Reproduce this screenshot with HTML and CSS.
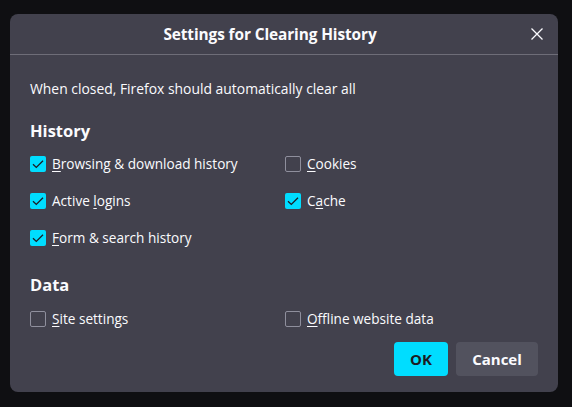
FILE: index.html
```html
<!DOCTYPE html>
<html>
<head>
<meta charset="utf-8">
<link rel="stylesheet" href="styles.css">
</head>
<body>
<div class="dialog">
  <div class="header">
    <div class="title">Settings for Clearing History</div>
    <svg class="close" width="12" height="12" viewBox="0 0 12 12"><path d="M0.5 0.5 L11.5 11.5 M11.5 0.5 L0.5 11.5" stroke="#fbfbfe" stroke-width="1.3" fill="none"/></svg>
  </div>
  <div class="content">
    <p class="intro">When closed, Firefox should automatically clear all</p>
    <div class="heading heading-history">History</div>
    <div class="grid grid-history">
      <label class="item"><span class="box checked"><svg width="16" height="16" viewBox="0 0 16 16"><path d="M3 8.2 L6.3 11.4 L13 4.8" stroke="#1c1b22" stroke-width="1.3" fill="none"/></svg></span><span><u>B</u>rowsing &amp; download history</span></label>
      <label class="item"><span class="box"></span><span><u>C</u>ookies</span></label>
      <label class="item"><span class="box checked"><svg width="16" height="16" viewBox="0 0 16 16"><path d="M3 8.2 L6.3 11.4 L13 4.8" stroke="#1c1b22" stroke-width="1.3" fill="none"/></svg></span><span>Active <u>l</u>ogins</span></label>
      <label class="item"><span class="box checked"><svg width="16" height="16" viewBox="0 0 16 16"><path d="M3 8.2 L6.3 11.4 L13 4.8" stroke="#1c1b22" stroke-width="1.3" fill="none"/></svg></span><span>C<u>a</u>che</span></label>
      <label class="item"><span class="box checked"><svg width="16" height="16" viewBox="0 0 16 16"><path d="M3 8.2 L6.3 11.4 L13 4.8" stroke="#1c1b22" stroke-width="1.3" fill="none"/></svg></span><span><u>F</u>orm &amp; search history</span></label>
    </div>
    <div class="heading heading-data">Data</div>
    <div class="grid grid-data">
      <label class="item"><span class="box"></span><span><u>S</u>ite settings</span></label>
      <label class="item"><span class="box"></span><span><u>O</u>ffline website data</span></label>
    </div>
    <div class="buttons">
      <button class="btn btn-ok">OK</button>
      <button class="btn btn-cancel">Cancel</button>
    </div>
  </div>
</div>
</body>
</html>
```

FILE: styles.css
```css
html, body {
  margin: 0;
  padding: 0;
  background: #0f0f12;
}
body {
  padding: 14px 14px 0 10px;
  font-family: "Open Sans", "Noto Sans", sans-serif;
  color: #fbfbfe;
  font-size: 13.6px;
}
.dialog {
  width: 548px;
  height: 378px;
  background: #42414d;
  border-radius: 8px;
  box-sizing: border-box;
  display: flex;
  flex-direction: column;
}
.header {
  height: 40px;
  border-bottom: 1px solid #6e6d78;
  display: flex;
  align-items: center;
  justify-content: center;
  position: relative;
  flex-shrink: 0;
  padding-right: 28px;
}
.title {
  font-weight: 700;
  font-size: 15.4px;
  letter-spacing: -0.1px;
  margin-top: 1px;
}
.close {
  position: absolute;
  right: 15px;
  top: 14px;
}
.content {
  padding: 0 20px 16px 20px;
  display: flex;
  flex-direction: column;
  flex: 1;
}
.intro {
  margin: 24px 0 0 0;
  line-height: 20px;
  height: 20px;
  font-size: 13.9px;
}
.heading {
  font-weight: 700;
  font-size: 16.5px;
  line-height: 20px;
  height: 20px;
}
.heading-history { margin-top: 22px; }
.heading-data { margin-top: 27px; }
.grid {
  display: grid;
  grid-template-columns: 255px 1fr;
  row-gap: 17px;
  grid-auto-rows: 20px;
}
.grid-history { margin-top: 13px; }
.grid-data { margin-top: 14px; }
.item {
  display: flex;
  align-items: center;
  gap: 6px;
  line-height: 20px;
}
.item u {
  text-underline-offset: 2px;
}
.box {
  width: 16px;
  height: 16px;
  box-sizing: border-box;
  border: 1px solid #8f8f9d;
  border-radius: 2px;
  flex-shrink: 0;
  display: block;
}
.box.checked {
  border: none;
  background: #00ddff;
}
.box svg { display: block; }
.buttons {
  margin-top: 13px;
  display: flex;
  justify-content: flex-end;
  gap: 8px;
}
.btn {
  height: 34px;
  border: none;
  border-radius: 4px;
  font-family: "Open Sans", "Noto Sans", sans-serif;
  font-weight: 700;
  font-size: 15px;
  padding: 0;
}
.btn-ok {
  width: 54px;
  background: #00ddff;
  color: #1c1b22;
}
.btn-cancel {
  width: 82px;
  background: #52525e;
  color: #fbfbfe;
}
```
